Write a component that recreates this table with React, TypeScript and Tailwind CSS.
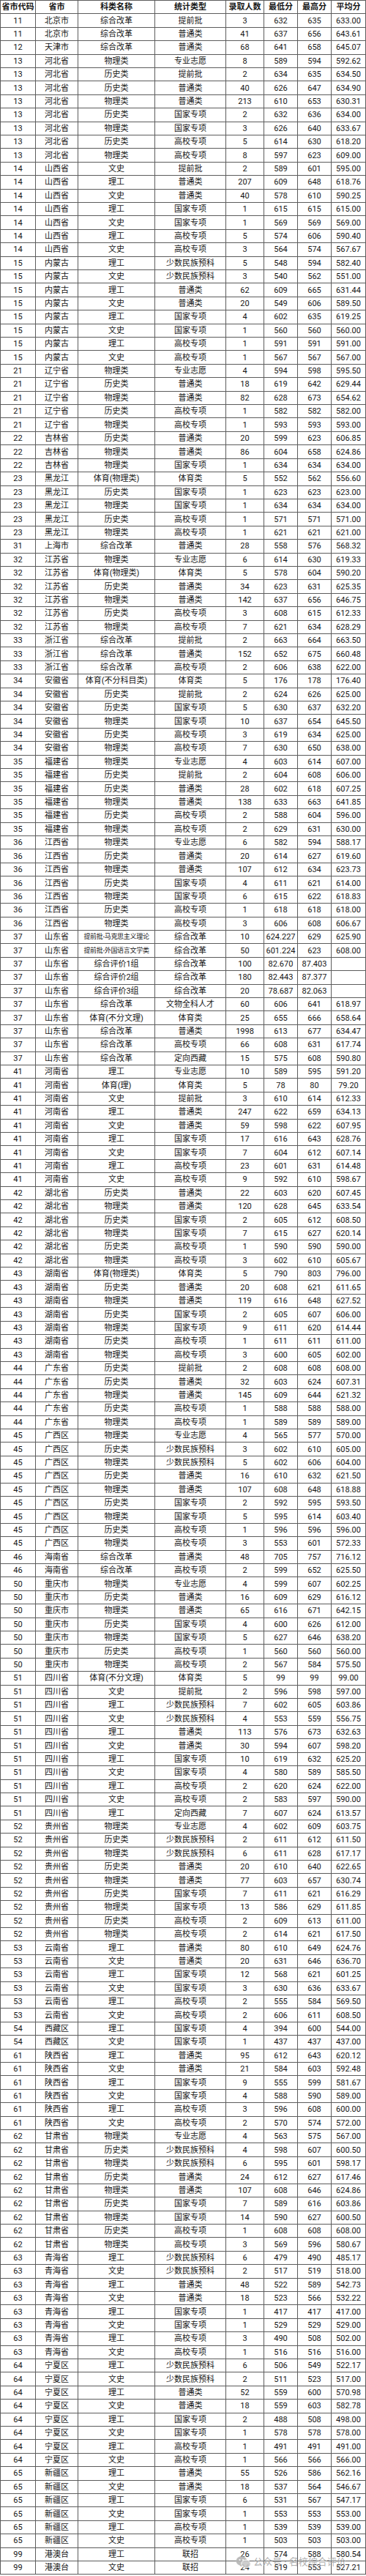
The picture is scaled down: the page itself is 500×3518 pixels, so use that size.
import React from 'react';

const HEADERS = ['省市代码', '省市', '科类名称', '统计类型', '录取人数', '最低分', '最高分', '平均分'];

// one line per row: code,province,subject,type,count,min,max,avg
const RAW = `11,北京市,综合改革,提前批,3,632,635,633.00
11,北京市,综合改革,普通类,41,637,656,643.61
12,天津市,综合改革,普通类,68,641,658,645.07
13,河北省,物理类,专业志愿,8,589,594,592.62
13,河北省,历史类,提前批,2,634,635,634.50
13,河北省,历史类,普通类,40,626,647,634.90
13,河北省,物理类,普通类,213,610,653,630.31
13,河北省,历史类,国家专项,2,632,636,634.00
13,河北省,物理类,国家专项,3,626,640,633.67
13,河北省,历史类,高校专项,5,614,630,618.20
13,河北省,物理类,高校专项,8,597,623,609.00
14,山西省,文史,提前批,2,589,601,595.00
14,山西省,理工,普通类,207,609,648,618.76
14,山西省,文史,普通类,40,578,610,590.25
14,山西省,理工,国家专项,1,615,615,615.00
14,山西省,文史,国家专项,1,569,569,569.00
14,山西省,理工,高校专项,5,574,606,590.40
14,山西省,文史,高校专项,3,564,574,567.67
15,内蒙古,理工,少数民族预科,5,548,594,582.40
15,内蒙古,文史,少数民族预科,3,540,562,551.00
15,内蒙古,理工,普通类,62,609,665,631.44
15,内蒙古,文史,普通类,20,549,606,589.50
15,内蒙古,理工,国家专项,4,602,635,619.25
15,内蒙古,文史,国家专项,1,560,560,560.00
15,内蒙古,理工,高校专项,1,591,591,591.00
15,内蒙古,文史,高校专项,1,567,567,567.00
21,辽宁省,物理类,专业志愿,4,594,598,595.50
21,辽宁省,历史类,普通类,18,619,642,629.44
21,辽宁省,物理类,普通类,82,628,673,654.62
21,辽宁省,历史类,高校专项,1,582,582,582.00
21,辽宁省,物理类,高校专项,1,593,593,593.00
22,吉林省,历史类,普通类,20,599,623,606.85
22,吉林省,物理类,普通类,86,604,658,624.86
22,吉林省,物理类,国家专项,1,634,634,634.00
23,黑龙江,体育(物理类),体育类,5,552,562,556.60
23,黑龙江,历史类,国家专项,1,623,623,623.00
23,黑龙江,物理类,国家专项,1,634,634,634.00
23,黑龙江,历史类,高校专项,1,571,571,571.00
23,黑龙江,物理类,高校专项,1,621,621,621.00
31,上海市,综合改革,普通类,28,558,576,568.32
32,江苏省,物理类,专业志愿,6,614,630,619.33
32,江苏省,体育(物理类),体育类,5,578,604,590.20
32,江苏省,历史类,普通类,34,623,631,625.35
32,江苏省,物理类,普通类,142,637,656,646.75
32,江苏省,历史类,高校专项,3,608,615,612.33
32,江苏省,物理类,高校专项,7,621,634,628.29
33,浙江省,综合改革,提前批,2,663,664,663.50
33,浙江省,综合改革,普通类,152,652,675,660.48
33,浙江省,综合改革,高校专项,2,606,638,622.00
34,安徽省,体育(不分科目类),体育类,5,176,178,176.40
34,安徽省,历史类,提前批,2,624,626,625.00
34,安徽省,历史类,国家专项,5,630,637,632.20
34,安徽省,物理类,国家专项,10,637,654,645.50
34,安徽省,历史类,高校专项,3,619,634,625.00
34,安徽省,物理类,高校专项,7,630,650,638.00
35,福建省,物理类,专业志愿,4,603,614,607.00
35,福建省,历史类,提前批,2,604,608,606.00
35,福建省,历史类,普通类,28,602,618,607.25
35,福建省,物理类,普通类,138,633,663,641.85
35,福建省,历史类,高校专项,2,588,604,596.00
35,福建省,物理类,高校专项,2,629,631,630.00
36,江西省,物理类,专业志愿,6,582,594,588.17
36,江西省,历史类,普通类,20,614,627,619.60
36,江西省,物理类,普通类,107,612,634,623.73
36,江西省,历史类,国家专项,4,611,621,614.00
36,江西省,物理类,国家专项,6,615,622,618.83
36,江西省,历史类,高校专项,1,618,618,618.00
36,江西省,物理类,高校专项,3,606,608,606.67
37,山东省,提前批-马克思主义理论,综合改革,10,624.227,629,625.90
37,山东省,提前批-外国语言文学类,综合改革,50,601.224,623,608.00
37,山东省,综合评价1组,综合改革,100,82.670,87.403,
37,山东省,综合评价2组,综合改革,180,82.443,87.377,
37,山东省,综合评价3组,综合改革,20,78.687,82.063,
37,山东省,综合改革,文物全科人才,60,606,641,618.97
37,山东省,体育(不分文理),体育类,25,655,666,658.64
37,山东省,综合改革,普通类,1998,613,677,634.47
37,山东省,综合改革,高校专项,66,608,631,617.74
37,山东省,综合改革,定向西藏,15,575,608,590.80
41,河南省,理工,专业志愿,10,589,595,591.20
41,河南省,体育(理),体育类,5,78,80,79.20
41,河南省,文史,提前批,3,610,614,612.33
41,河南省,理工,普通类,247,622,659,634.13
41,河南省,文史,普通类,59,598,622,607.95
41,河南省,理工,国家专项,17,616,643,628.76
41,河南省,文史,国家专项,7,604,612,607.14
41,河南省,理工,高校专项,23,601,631,614.48
41,河南省,文史,高校专项,9,592,610,598.67
42,湖北省,历史类,普通类,22,603,620,607.45
42,湖北省,物理类,普通类,120,628,645,633.54
42,湖北省,历史类,国家专项,2,605,612,608.50
42,湖北省,物理类,国家专项,7,615,627,620.14
42,湖北省,历史类,高校专项,1,590,590,590.00
42,湖北省,物理类,高校专项,3,602,610,605.67
43,湖南省,体育(物理类),体育类,5,790,803,796.00
43,湖南省,历史类,普通类,20,608,621,611.65
43,湖南省,物理类,普通类,119,616,648,627.52
43,湖南省,历史类,国家专项,2,605,607,606.00
43,湖南省,物理类,国家专项,9,611,620,614.44
43,湖南省,历史类,高校专项,1,611,611,611.00
43,湖南省,物理类,高校专项,3,600,605,602.00
44,广东省,历史类,提前批,2,608,608,608.00
44,广东省,历史类,普通类,32,603,624,607.31
44,广东省,物理类,普通类,145,609,644,621.32
44,广东省,历史类,高校专项,1,588,588,588.00
44,广东省,物理类,高校专项,1,589,589,589.00
45,广西区,物理类,专业志愿,4,565,577,570.00
45,广西区,历史类,少数民族预科,3,602,610,605.00
45,广西区,物理类,少数民族预科,5,602,606,604.00
45,广西区,历史类,普通类,16,610,632,621.50
45,广西区,物理类,普通类,107,608,648,618.88
45,广西区,历史类,国家专项,2,592,595,593.50
45,广西区,物理类,国家专项,5,595,614,603.40
45,广西区,历史类,高校专项,1,596,596,596.00
45,广西区,物理类,高校专项,3,553,601,572.33
46,海南省,综合改革,普通类,48,705,757,716.12
46,海南省,综合改革,高校专项,2,599,652,625.50
50,重庆市,物理类,专业志愿,4,599,607,602.25
50,重庆市,历史类,普通类,16,609,629,616.12
50,重庆市,物理类,普通类,65,616,671,642.15
50,重庆市,历史类,国家专项,4,600,626,612.00
50,重庆市,物理类,国家专项,5,627,646,638.20
50,重庆市,历史类,高校专项,1,560,560,560.00
50,重庆市,物理类,高校专项,2,567,584,575.50
51,四川省,体育(不分文理),体育类,5,99,99,99.00
51,四川省,文史,提前批,2,596,598,597.00
51,四川省,理工,少数民族预科,7,602,605,603.86
51,四川省,文史,少数民族预科,4,553,559,556.75
51,四川省,理工,普通类,113,576,673,632.63
51,四川省,文史,普通类,30,594,607,598.20
51,四川省,理工,国家专项,10,619,632,625.20
51,四川省,文史,国家专项,4,580,589,585.50
51,四川省,理工,高校专项,2,620,624,622.00
51,四川省,文史,高校专项,2,583,597,590.00
51,四川省,理工,定向西藏,7,607,624,613.57
52,贵州省,物理类,专业志愿,4,602,609,603.75
52,贵州省,历史类,少数民族预科,2,611,612,611.50
52,贵州省,物理类,少数民族预科,6,611,628,617.17
52,贵州省,历史类,普通类,20,610,640,622.65
52,贵州省,物理类,普通类,77,603,657,630.74
52,贵州省,历史类,国家专项,7,611,621,616.29
52,贵州省,物理类,国家专项,13,586,629,611.85
52,贵州省,历史类,高校专项,2,609,613,611.00
52,贵州省,物理类,高校专项,2,614,621,617.50
53,云南省,理工,普通类,80,610,649,624.76
53,云南省,文史,普通类,20,631,646,636.70
53,云南省,理工,国家专项,12,568,621,601.25
53,云南省,文史,国家专项,3,630,636,633.67
53,云南省,理工,高校专项,2,555,584,569.50
53,云南省,文史,高校专项,2,606,611,608.50
54,西藏区,理工,国家专项,4,394,600,544.00
54,西藏区,文史,国家专项,1,437,437,437.00
61,陕西省,理工,普通类,95,612,643,620.12
61,陕西省,文史,普通类,21,584,603,592.48
61,陕西省,理工,国家专项,9,555,599,581.67
61,陕西省,文史,国家专项,4,588,590,589.00
61,陕西省,理工,高校专项,3,596,608,600.00
61,陕西省,文史,高校专项,2,570,574,572.00
62,甘肃省,物理类,专业志愿,4,563,575,567.00
62,甘肃省,历史类,少数民族预科,4,598,607,600.50
62,甘肃省,物理类,少数民族预科,6,595,601,598.17
62,甘肃省,历史类,普通类,24,612,627,617.46
62,甘肃省,物理类,普通类,107,608,646,624.86
62,甘肃省,历史类,国家专项,7,589,616,603.86
62,甘肃省,物理类,国家专项,14,590,627,600.50
62,甘肃省,历史类,高校专项,1,608,608,608.00
62,甘肃省,物理类,高校专项,3,569,596,580.67
63,青海省,理工,少数民族预科,6,479,490,485.17
63,青海省,文史,少数民族预科,2,517,519,518.00
63,青海省,理工,普通类,48,522,589,542.73
63,青海省,文史,普通类,18,523,566,532.22
63,青海省,理工,国家专项,1,417,417,417.00
63,青海省,文史,国家专项,1,529,529,529.00
63,青海省,理工,高校专项,3,490,508,502.00
63,青海省,文史,高校专项,1,516,516,516.00
64,宁夏区,理工,少数民族预科,6,506,549,522.17
64,宁夏区,文史,少数民族预科,2,511,523,517.00
64,宁夏区,理工,普通类,52,559,600,570.98
64,宁夏区,文史,普通类,18,559,603,582.78
64,宁夏区,理工,国家专项,2,488,508,498.00
64,宁夏区,文史,国家专项,1,578,578,578.00
64,宁夏区,理工,高校专项,1,491,491,491.00
64,宁夏区,文史,高校专项,1,566,566,566.00
65,新疆区,理工,普通类,55,526,586,562.16
65,新疆区,文史,普通类,18,537,564,546.67
65,新疆区,理工,国家专项,6,531,567,547.17
65,新疆区,文史,国家专项,1,553,553,553.00
65,新疆区,理工,高校专项,1,539,539,539.00
65,新疆区,文史,高校专项,1,503,503,503.00
99,港澳台,理工,联招,26,574,588,580.54
99,港澳台,文史,联招,24,519,553,527.21`;

const ROWS = RAW.split('\n').map((line) => line.split(','));

const GRID = 'grid grid-cols-[48px_58px_105px_97px_52px_46px_46px_47px]';
const FONT = { fontFamily: 'Roboto, "Noto Sans CJK SC", sans-serif' };

function Cell({ children, small }: { children: React.ReactNode; small?: boolean }) {
  return (
    <div
      className={`flex items-center justify-center overflow-hidden whitespace-nowrap border-r border-[#5c5c5c] leading-none ${
        small ? 'text-[9px] tracking-[-0.3px]' : 'text-[11px]'
      }`}
    >
      {children}
    </div>
  );
}

function WechatMark() {
  return (
    <svg width="21" height="18" viewBox="0 0 21 18">
      <ellipse cx="8" cy="7.5" rx="7.5" ry="6.5" fill="#b5b5b5" />
      <ellipse cx="14" cy="11.5" rx="6.3" ry="5.4" fill="#c8c8c8" stroke="#fff" strokeWidth="1" />
      <circle cx="5.5" cy="6" r="1" fill="#fff" />
      <circle cx="10" cy="6" r="1" fill="#fff" />
    </svg>
  );
}

export default function App() {
  return (
    <div className="relative w-[500px] bg-white text-[#151515]" style={FONT}>
      <div className="border-l border-t border-[#5c5c5c]">
        <div className={`${GRID} h-[18.3px] border-b border-[#5c5c5c] font-bold`}>
          {HEADERS.map((h) => (
            <Cell key={h}>{h}</Cell>
          ))}
        </div>
        {ROWS.map((r, i) => (
          <div key={i} className={`${GRID} h-[18.41px] border-b border-[#5c5c5c]`}>
            {r.map((v, j) => (
              <Cell key={j} small={j === 2 && v.length > 9}>
                {v}
              </Cell>
            ))}
          </div>
        ))}
      </div>

      {/* watermark */}
      <div className="absolute left-[322px] top-[3489px] flex items-center gap-[3px] text-[13px] text-[#a8a8a8] opacity-90">
        <WechatMark />
        <span>公众号 · 名校综合评价</span>
      </div>
    </div>
  );
}
